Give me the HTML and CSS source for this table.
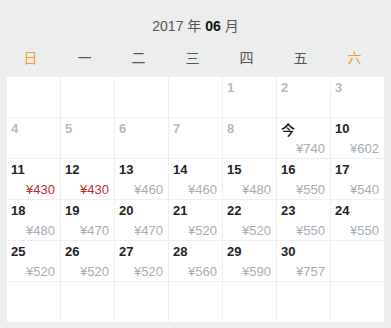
FILE: index.html
```html
<!DOCTYPE html>
<html lang="zh">
<head>
<meta charset="utf-8">
<link rel="stylesheet" href="styles.css">
</head>
<body>
<div class="cal">
  <div class="title">2017 年 <b>06</b> 月</div>
  <div class="weekdays">
    <span class="wk">日</span><span>一</span><span>二</span><span>三</span><span>四</span><span>五</span><span class="wk">六</span>
  </div>
  <div class="grid">
    <div class="cell"></div><div class="cell"></div><div class="cell"></div><div class="cell"></div>
    <div class="cell past"><span class="num">1</span></div>
    <div class="cell past"><span class="num">2</span></div>
    <div class="cell past"><span class="num">3</span></div>

    <div class="cell past"><span class="num">4</span></div>
    <div class="cell past"><span class="num">5</span></div>
    <div class="cell past"><span class="num">6</span></div>
    <div class="cell past"><span class="num">7</span></div>
    <div class="cell past"><span class="num">8</span></div>
    <div class="cell"><span class="num today">今</span><span class="price">¥740</span></div>
    <div class="cell"><span class="num">10</span><span class="price">¥602</span></div>

    <div class="cell"><span class="num">11</span><span class="price low">¥430</span></div>
    <div class="cell"><span class="num">12</span><span class="price low">¥430</span></div>
    <div class="cell"><span class="num">13</span><span class="price">¥460</span></div>
    <div class="cell"><span class="num">14</span><span class="price">¥460</span></div>
    <div class="cell"><span class="num">15</span><span class="price">¥480</span></div>
    <div class="cell"><span class="num">16</span><span class="price">¥550</span></div>
    <div class="cell"><span class="num">17</span><span class="price">¥540</span></div>

    <div class="cell"><span class="num">18</span><span class="price">¥480</span></div>
    <div class="cell"><span class="num">19</span><span class="price">¥470</span></div>
    <div class="cell"><span class="num">20</span><span class="price">¥470</span></div>
    <div class="cell"><span class="num">21</span><span class="price">¥520</span></div>
    <div class="cell"><span class="num">22</span><span class="price">¥520</span></div>
    <div class="cell"><span class="num">23</span><span class="price">¥550</span></div>
    <div class="cell"><span class="num">24</span><span class="price">¥550</span></div>

    <div class="cell"><span class="num">25</span><span class="price">¥520</span></div>
    <div class="cell"><span class="num">26</span><span class="price">¥520</span></div>
    <div class="cell"><span class="num">27</span><span class="price">¥520</span></div>
    <div class="cell"><span class="num">28</span><span class="price">¥560</span></div>
    <div class="cell"><span class="num">29</span><span class="price">¥590</span></div>
    <div class="cell"><span class="num">30</span><span class="price">¥757</span></div>
    <div class="cell"></div>

    <div class="cell"></div><div class="cell"></div><div class="cell"></div><div class="cell"></div><div class="cell"></div><div class="cell"></div><div class="cell"></div>
  </div>
</div>
</body>
</html>
```
FILE: styles.css
```css
html, body {
  margin: 0;
  padding: 0;
  background: #eceeee;
}
body {
  font-family: "Liberation Sans", "Noto Sans CJK SC", sans-serif;
  width: 391px;
  height: 328px;
  overflow: hidden;
}
.cal {
  display: flex;
  flex-direction: column;
}
.title {
  height: 20px;
  line-height: 20px;
  padding: 16px 0 6px;
  text-align: center;
  font-size: 14px;
  color: #555;
  font-family: "Liberation Sans", "Noto Sans CJK SC", sans-serif;
}
.title b {
  color: #111;
  font-weight: bold;
}
.weekdays {
  display: grid;
  grid-template-columns: repeat(7, 53px);
  column-gap: 1px;
  margin-left: 4px;
  height: 30px;
  line-height: 30px;
  font-family: "Noto Sans CJK SC", sans-serif;
  font-size: 14px;
  color: #555;
  text-align: center;
}
.weekdays .wk {
  color: #f0a030;
}
.grid {
  margin: 5px 0 0 7px;
  width: 377px;
  display: grid;
  grid-template-columns: repeat(7, 53px);
  grid-auto-rows: 40px;
  gap: 1px;
  background: #efefef;
}
.cell {
  background: #fff;
  display: flex;
  flex-direction: column;
}
.num {
  padding: 3px 0 0 4px;
  line-height: 16px;
  font-size: 13px;
  font-weight: bold;
  color: #222;
}
.past .num {
  color: #b8b8b8;
}
.num.today {
  font-family: "Noto Sans CJK SC", sans-serif;
  font-weight: 500;
  font-size: 14px;
  color: #111;
}
.price {
  margin-top: auto;
  padding: 0 5px 2px 0;
  line-height: 14px;
  text-align: right;
  font-size: 13px;
  color: #a4adb5;
}
.price.low {
  color: #b5302e;
}
```
